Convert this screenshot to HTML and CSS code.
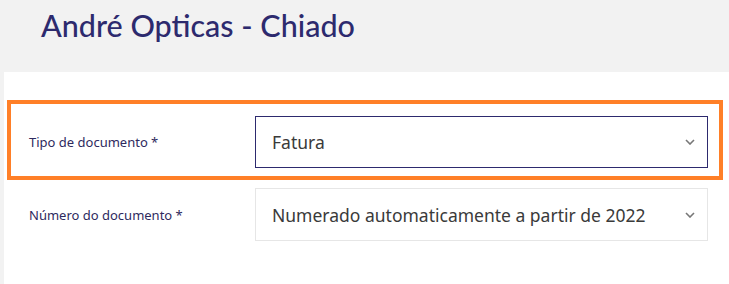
FILE: index.html
```html
<!DOCTYPE html>
<html lang="pt">
<head>
<meta charset="utf-8">
<link rel="stylesheet" href="styles.css">
</head>
<body>
<header class="page-header">
  <h1 class="page-title">André Opticas - Chiado</h1>
</header>
<main class="card">
  <div class="highlight">
    <div class="form-row first">
      <label class="field-label">Tipo de documento *</label>
      <div class="select active">
        <span class="select-value">Fatura</span>
        <svg class="chevron" viewBox="0 0 10 6" width="10" height="6"><path d="M1 1 L5 5 L9 1" fill="none" stroke="#777" stroke-width="1.6"/></svg>
      </div>
    </div>
  </div>
  <div class="form-row second">
    <label class="field-label">Número do documento *</label>
    <div class="select">
      <span class="select-value">Numerado automaticamente a partir de 2022</span>
      <svg class="chevron" viewBox="0 0 10 6" width="10" height="6"><path d="M1 1 L5 5 L9 1" fill="none" stroke="#777" stroke-width="1.6"/></svg>
    </div>
  </div>
</main>
</body>
</html>
```
FILE: styles.css
```css
html, body {
  margin: 0;
  padding: 0;
  background: #f2f2f2;
  height: 100%;
}
body {
  display: flex;
  flex-direction: column;
}
.page-header {
  height: 72px;
  flex: none;
  padding-left: 41px;
  box-sizing: border-box;
}
.page-title {
  margin: 0;
  padding-top: 5px;
  font-family: Lato, "Liberation Sans", sans-serif;
  font-weight: 500;
  font-size: 30.5px;
  line-height: 40px;
  color: #2d2a6e;
}
.card {
  flex: 1;
  background: #fff;
  margin-left: 4px;
  padding-top: 28px;
  padding-left: 3px;
  padding-right: 6px;
}
.highlight {
  border: 4px solid #ff7f27;
}
.form-row {
  display: grid;
  grid-template-columns: 226px 453px;
  align-items: center;
  padding-left: 18px;
}
.form-row.first {
  padding-top: 12px;
  padding-bottom: 8px;
}
.form-row.second {
  padding-top: 8px;
  padding-left: 22px;
}
.field-label {
  font-family: "Noto Sans", "Open Sans", sans-serif;
  font-size: 13px;
  color: #2e2a5e;
}
.select {
  display: flex;
  align-items: center;
  justify-content: space-between;
  height: 52px;
  box-sizing: border-box;
  border: 1px solid #e6e6e6;
  padding: 0 12px 0 16px;
  font-family: "Noto Sans", "Open Sans", sans-serif;
  font-size: 17.5px;
  color: #3a3a3a;
}
.select.active {
  border-color: #2d2a6e;
}
.second .select {
  height: 53px;
}
.chevron {
  display: block;
}
```
